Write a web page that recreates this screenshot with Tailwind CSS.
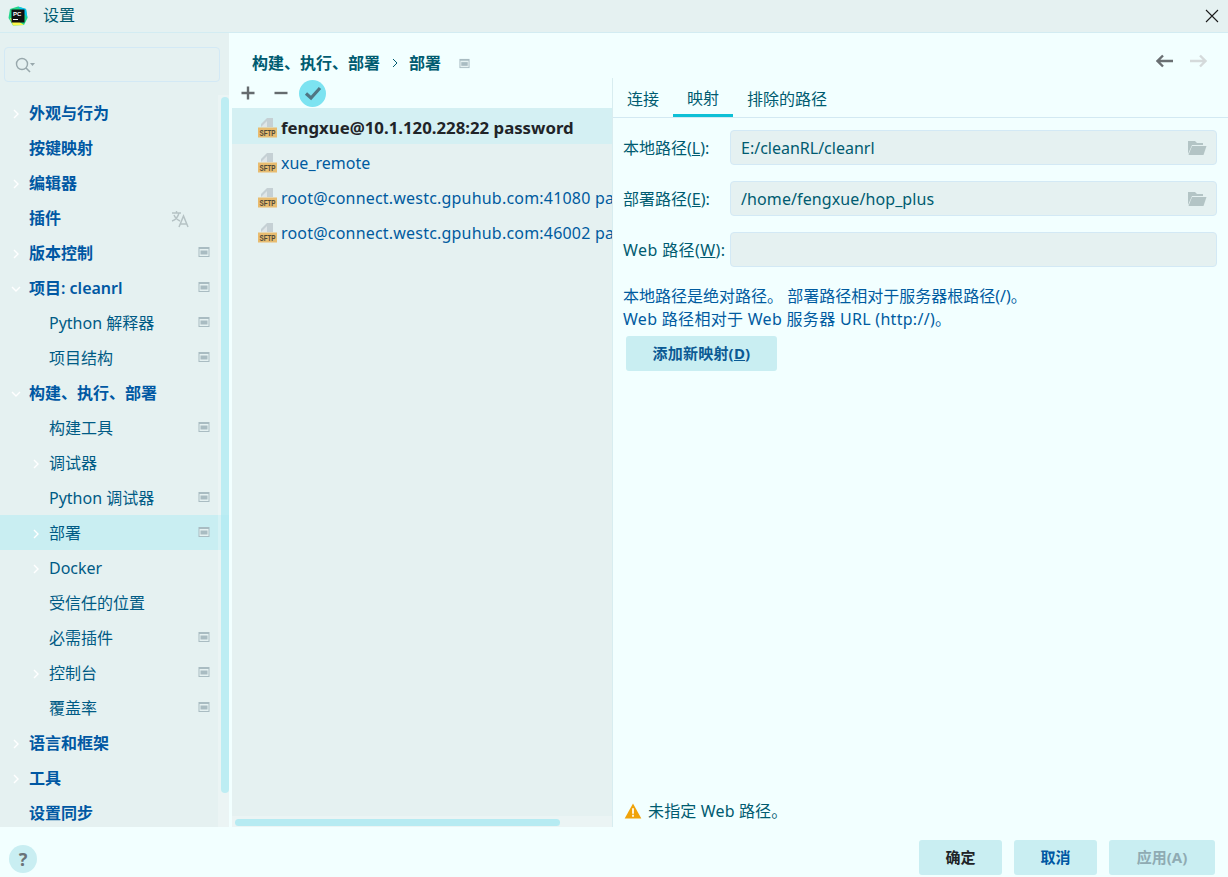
<!DOCTYPE html>
<html lang="zh">
<head>
<meta charset="UTF-8">
<title>设置</title>
<script src="https://cdn.jsdelivr.net/npm/@tailwindcss/browser@4"></script>
</head>
<body class="w-[1228px] h-[877px] overflow-hidden bg-[#f2ffff] text-[#005b70] text-[16px] font-['Noto_Sans','Noto_Sans_CJK_SC',sans-serif] flex flex-col">
<svg class="hidden">
  <symbol id="pin" viewBox="0 0 12 12"><rect x="0.5" y="1" width="11" height="10" fill="#a9bcc2"/><rect x="1.5" y="3" width="9" height="7" fill="#e5f1f1"/><rect x="2.5" y="4.5" width="7" height="4" fill="#a9bcc2"/></symbol>
  <symbol id="sftp" viewBox="0 0 20 20"><path d="M3 9 V6 L9 0 H15 V9Z" fill="#c5d0d4"/><path d="M3 9 L9 3 V9Z" fill="#dfe6e8"/><rect x="0" y="9.5" width="19" height="10" fill="#e8bc70"/><text x="9.5" y="17.6" text-anchor="middle" font-size="8.5" font-weight="700" fill="#4f4a3a" font-family="Liberation Sans" textLength="16" lengthAdjust="spacingAndGlyphs">SFTP</text></symbol>
  <symbol id="right" viewBox="0 0 10 10"><path d="M3 1 L7 5 L3 9" fill="none" stroke="#fff" stroke-width="1.4"/></symbol>
  <symbol id="down" viewBox="0 0 10 10"><path d="M1 3 L5 7 L9 3" fill="none" stroke="#fff" stroke-width="1.4"/></symbol>
  <symbol id="folder" viewBox="0 0 20 16"><path d="M1 1 H8 L10 3 H16 V5 H5 L1 14Z" fill="#b3c4c5"/><path d="M5 6 H19.5 L16.5 15 H1.5Z" fill="#b3c4c5"/></symbol>
</svg>

<!-- title bar -->
<div class="h-[33px] shrink-0 bg-[#e5f1f1] border-b border-[#d3ecf2] flex items-center pl-[8px] pr-[9px]">
  <svg width="20" height="20" viewBox="0 0 20 20"><path d="M2 3 L10 0.5 L18 3 L19.5 12 L16 19 L5 19.5 L0.5 12Z" fill="#21d789"/><path d="M10 0.5 L18 3 L19.5 12 L15 6Z" fill="#07c3f2"/><path d="M2 12 L5 19.5 L16 19 L10 15Z" fill="#fcf84a"/><rect x="3.5" y="3.5" width="13" height="13" fill="#111"/><text x="5" y="10" font-size="6" font-weight="700" fill="#fff" font-family="Liberation Sans">PC</text><rect x="5" y="13" width="5" height="1" fill="#fff"/></svg>
  <span class="ml-[15px] -mt-[2px] leading-none">设置</span>
  <svg class="ml-auto" width="14" height="14" viewBox="0 0 14 14"><path d="M1 1 L13 13 M13 1 L1 13" stroke="#1b1b1b" stroke-width="1.1"/></svg>
</div>

<!-- main -->
<div class="h-[794px] shrink-0 flex">
  <!-- sidebar -->
  <div class="relative w-[229px] shrink-0 bg-[#e5f1f1] pt-[14px]">
    <div class="ml-[4px] w-[216px] h-[35px] rounded-[4px] border border-[#d3e9f5] flex items-center pl-[9px]">
      <svg width="22" height="18" viewBox="0 0 22 18"><circle cx="8" cy="8" r="5.5" fill="none" stroke="#98a8ac" stroke-width="1.4"/><path d="M12 12 L16 16" stroke="#98a8ac" stroke-width="1.6"/><path d="M16 7 H21 L18.5 10Z" fill="#98a8ac"/></svg>
    </div>
    <div class="mt-[14px] text-[#0058a3] leading-[35px]">
      <div class="h-[35px] flex items-center font-semibold"><svg class="ml-[11px] w-[10px] h-[10px]"><use href="#right"/></svg><span class="ml-[8px]">外观与行为</span></div>
      <div class="h-[35px] flex items-center font-semibold"><span class="ml-[29px]">按键映射</span></div>
      <div class="h-[35px] flex items-center font-semibold"><svg class="ml-[11px] w-[10px] h-[10px]"><use href="#right"/></svg><span class="ml-[8px]">编辑器</span></div>
      <div class="h-[35px] flex items-center font-semibold pr-[40px]"><span class="ml-[29px]">插件</span><svg class="ml-auto" width="18" height="18" viewBox="0 0 18 18"><path d="M1 3 H10 M5.5 1 V3 M8 3 C7 7 4 10 1 11 M3 5 C4 8 7 10 9 11" fill="none" stroke="#b5c2c4" stroke-width="1.4"/><path d="M8 17 L12.5 6 L17 17 M9.5 14 H15.5" fill="none" stroke="#b5c2c4" stroke-width="1.5"/></svg></div>
      <div class="h-[35px] flex items-center font-semibold pr-[19px]"><svg class="ml-[11px] w-[10px] h-[10px]"><use href="#right"/></svg><span class="ml-[8px]">版本控制</span><svg class="ml-auto mb-[3px] w-[12px] h-[12px]"><use href="#pin"/></svg></div>
      <div class="h-[35px] flex items-center font-semibold pr-[19px]"><svg class="ml-[11px] w-[10px] h-[10px]"><use href="#down"/></svg><span class="ml-[8px]">项目: cleanrl</span><svg class="ml-auto mb-[3px] w-[12px] h-[12px]"><use href="#pin"/></svg></div>
      <div class="h-[35px] flex items-center pr-[19px] text-[#005b85]"><span class="ml-[49px]">Python 解释器</span><svg class="ml-auto mb-[3px] w-[12px] h-[12px]"><use href="#pin"/></svg></div>
      <div class="h-[35px] flex items-center pr-[19px] text-[#005b85]"><span class="ml-[49px]">项目结构</span><svg class="ml-auto mb-[3px] w-[12px] h-[12px]"><use href="#pin"/></svg></div>
      <div class="h-[35px] flex items-center font-semibold"><svg class="ml-[11px] w-[10px] h-[10px]"><use href="#down"/></svg><span class="ml-[8px]">构建、执行、部署</span></div>
      <div class="h-[35px] flex items-center pr-[19px] text-[#005b85]"><span class="ml-[49px]">构建工具</span><svg class="ml-auto mb-[3px] w-[12px] h-[12px]"><use href="#pin"/></svg></div>
      <div class="h-[35px] flex items-center text-[#005b85]"><svg class="ml-[31px] w-[10px] h-[10px]"><use href="#right"/></svg><span class="ml-[8px]">调试器</span></div>
      <div class="h-[35px] flex items-center pr-[19px] text-[#005b85]"><span class="ml-[49px]">Python 调试器</span><svg class="ml-auto mb-[3px] w-[12px] h-[12px]"><use href="#pin"/></svg></div>
      <div class="h-[35px] -mt-[1px] mb-[1px] pt-[2px] flex items-center pr-[19px] text-[#005b85] bg-[#c9eef2]"><svg class="ml-[31px] w-[10px] h-[10px]"><use href="#right"/></svg><span class="ml-[8px]">部署</span><svg class="ml-auto mb-[3px] w-[12px] h-[12px]"><use href="#pin"/></svg></div>
      <div class="h-[35px] flex items-center text-[#005b85]"><svg class="ml-[31px] w-[10px] h-[10px]"><use href="#right"/></svg><span class="ml-[8px]">Docker</span></div>
      <div class="h-[35px] flex items-center text-[#005b85]"><span class="ml-[49px]">受信任的位置</span></div>
      <div class="h-[35px] flex items-center pr-[19px] text-[#005b85]"><span class="ml-[49px]">必需插件</span><svg class="ml-auto mb-[3px] w-[12px] h-[12px]"><use href="#pin"/></svg></div>
      <div class="h-[35px] flex items-center pr-[19px] text-[#005b85]"><svg class="ml-[31px] w-[10px] h-[10px]"><use href="#right"/></svg><span class="ml-[8px]">控制台</span><svg class="ml-auto mb-[3px] w-[12px] h-[12px]"><use href="#pin"/></svg></div>
      <div class="h-[35px] flex items-center pr-[19px] text-[#005b85]"><span class="ml-[49px]">覆盖率</span><svg class="ml-auto mb-[3px] w-[12px] h-[12px]"><use href="#pin"/></svg></div>
      <div class="h-[35px] flex items-center font-semibold"><svg class="ml-[11px] w-[10px] h-[10px]"><use href="#right"/></svg><span class="ml-[8px]">语言和框架</span></div>
      <div class="h-[35px] flex items-center font-semibold"><svg class="ml-[11px] w-[10px] h-[10px]"><use href="#right"/></svg><span class="ml-[8px]">工具</span></div>
      <div class="h-[35px] flex items-center font-semibold"><span class="ml-[29px]">设置同步</span></div>
    </div>
    <!-- scrollbar -->
    <div class="absolute left-[218px] top-[62px] bottom-0 w-[11px] bg-white/25">
      <div class="ml-[3px] mt-[2px] w-[8px] h-[696px] rounded-full bg-[#a9e9f2]/70"></div>
    </div>
  </div>

  <!-- content -->
  <div class="flex-1 flex flex-col min-w-0">
    <div class="h-[45px] shrink-0 flex items-center pl-[23px] pr-[21px] pt-[15px] font-semibold">
      <span>构建、执行、部署</span>
      <svg class="ml-[11px]" width="8" height="10" viewBox="0 0 8 10"><path d="M2 1 L6 5 L2 9" fill="none" stroke="#005b70" stroke-width="1"/></svg>
      <span class="ml-[10px]">部署</span>
      <svg class="ml-[18px] w-[11px] h-[11px]"><use href="#pin"/></svg>
      <svg class="ml-auto mb-[4px]" width="18" height="14" viewBox="0 0 18 14"><path d="M7 1.5 L1.5 7 L7 12.5 M2 7 H17" fill="none" stroke="#6a6f72" stroke-width="2.4"/></svg>
      <svg class="ml-[15px] mb-[4px]" width="18" height="14" viewBox="0 0 18 14"><path d="M11 1.5 L16.5 7 L11 12.5 M16 7 H1" fill="none" stroke="#d5dadb" stroke-width="2.4"/></svg>
    </div>
    <div class="flex-1 flex min-h-0">
      <!-- server list -->
      <div class="relative w-[381px] ml-[3px] shrink-0 flex flex-col border-r border-[#d8edf0]">
        <div class="h-[30px] shrink-0 flex items-center pl-[9px] bg-[#f2ffff]">
          <svg width="14" height="14" viewBox="0 0 14 14"><path d="M7 0.5 V13.5 M0.5 7 H13.5" stroke="#656b6e" stroke-width="2.4"/></svg>
          <svg class="ml-[19px]" width="14" height="14" viewBox="0 0 14 14"><path d="M0.5 7 H13.5" stroke="#656b6e" stroke-width="2.4"/></svg>
          <div class="ml-[11px] w-[27px] h-[27px] rounded-full bg-[#7ce3f1] flex items-center justify-center">
            <svg width="18" height="16" viewBox="0 0 18 16"><path d="M2 8.5 L7 13 L16 3" fill="none" stroke="#4f7683" stroke-width="3.2"/></svg>
          </div>
        </div>
        <div class="flex-1 bg-[#e5f1f1] overflow-hidden text-[#005b9f] whitespace-nowrap">
          <div class="h-[36px] pt-[4px] flex items-center pl-[26px] bg-[#d4f0f3] font-bold text-[#1f2428]"><svg class="w-[20px] h-[20px] shrink-0"><use href="#sftp"/></svg><span class="ml-[3px] text-[16.8px]">fengxue@10.1.120.228:22 password</span></div>
          <div class="h-[35px] mt-[1px] flex items-center pl-[26px]"><svg class="w-[20px] h-[20px] shrink-0"><use href="#sftp"/></svg><span class="ml-[3px]">xue_remote</span></div>
          <div class="h-[35px] flex items-center pl-[26px]"><svg class="w-[20px] h-[20px] shrink-0"><use href="#sftp"/></svg><span class="ml-[3px] tracking-[0.2px]">root@connect.westc.gpuhub.com:41080 password</span></div>
          <div class="h-[35px] flex items-center pl-[26px]"><svg class="w-[20px] h-[20px] shrink-0"><use href="#sftp"/></svg><span class="ml-[3px] tracking-[0.2px]">root@connect.westc.gpuhub.com:46002 password</span></div>
        </div>
        <div class="absolute left-0 right-0 bottom-0 h-[11px] bg-white/25">
          <div class="ml-[3px] mt-[3px] w-[325px] h-[7px] rounded-full bg-[#b6ebf2]"></div>
        </div>
      </div>

      <!-- mappings -->
      <div class="flex-1 flex flex-col min-w-0">
        <div class="h-[40px] shrink-0 border-b border-[#d3e9f2] flex items-end">
          <div class="h-[39px] w-[60px] flex items-center justify-center pt-[2px]">连接</div>
          <div class="h-[39px] w-[60px] flex items-center justify-center border-b-[3px] border-[#0ec0d6] pt-[3px]">映射</div>
          <div class="h-[39px] ml-[14px] flex items-center justify-center pt-[2px]">排除的路径</div>
        </div>
        <div class="px-[10px] pt-[12px] pr-[11px] flex flex-col">
          <div class="flex items-center h-[35px]">
            <span class="w-[107px] shrink-0">本地路径(<span class="underline">L</span>):</span>
            <div class="flex-1 h-[35px] px-[10px] rounded-[4px] bg-[#e5f1f1] border border-[#d3e9f5] flex items-center">E:/cleanRL/cleanrl<svg class="ml-auto w-[20px] h-[16px] -mr-[1px]"><use href="#folder"/></svg></div>
          </div>
          <div class="flex items-center mt-[16px] h-[35px]">
            <span class="w-[107px] shrink-0">部署路径(<span class="underline">E</span>):</span>
            <div class="flex-1 h-[35px] px-[10px] rounded-[4px] bg-[#e5f1f1] border border-[#d3e9f5] flex items-center tracking-[0.1px]">/home/fengxue/hop_plus<svg class="ml-auto w-[20px] h-[16px] -mr-[1px]"><use href="#folder"/></svg></div>
          </div>
          <div class="flex items-center mt-[16px] h-[35px]">
            <span class="w-[107px] shrink-0 tracking-[0.4px]">Web 路径(<span class="underline">W</span>):</span>
            <div class="flex-1 h-[35px] rounded-[4px] bg-[#e5f1f1] border border-[#d3e9f5]"></div>
          </div>
          <p class="mt-[18px] leading-[23px] text-[#005b9f]">本地路径是绝对路径。 部署路径相对于服务器根路径(/)。<br><span class="tracking-[0.3px]">Web 路径相对于 Web 服务器 URL (http://)。</span></p>
          <button class="mt-[5px] ml-[3px] w-[151px] h-[35px] rounded-[3px] bg-[#c9eef2] text-[15px] tracking-[0.2px] font-bold text-[#0b5a94]">添加新映射(<span class="underline">D</span>)</button>
        </div>
        <div class="mt-auto h-[32px] pl-[11px] flex items-center shrink-0">
          <svg width="18" height="16" viewBox="0 0 16 15"><path d="M8 0.5 L15.8 14.5 H0.2Z" fill="#f0a30a"/><path d="M8 5 V10 M8 11 V13" stroke="#fff" stroke-width="1.6"/></svg>
          <span class="ml-[6px] tracking-[0.15px]">未指定 Web 路径。</span>
        </div>
      </div>
    </div>
  </div>
</div>

<!-- footer -->
<div class="flex-1 flex items-start pt-[13px] pl-[9px] pr-[13px]">
  <div class="mt-[5px] w-[28px] h-[28px] rounded-full bg-[#c9eef2] flex items-center justify-center font-bold text-[18px] text-[#6a7378]">?</div>
  <button class="ml-auto w-[83px] h-[35px] rounded-[3px] bg-[#c9eef2] text-[15px] font-bold text-[#1f2428]">确定</button>
  <button class="ml-[12px] w-[83px] h-[35px] rounded-[3px] bg-[#c9eef2] text-[15px] font-bold text-[#0058a3]">取消</button>
  <button class="ml-[12px] w-[106px] h-[35px] rounded-[3px] bg-[#c9eef2] text-[15px] font-bold text-[#8fabb3]">应用(A)</button>
</div>
</body>
</html>
